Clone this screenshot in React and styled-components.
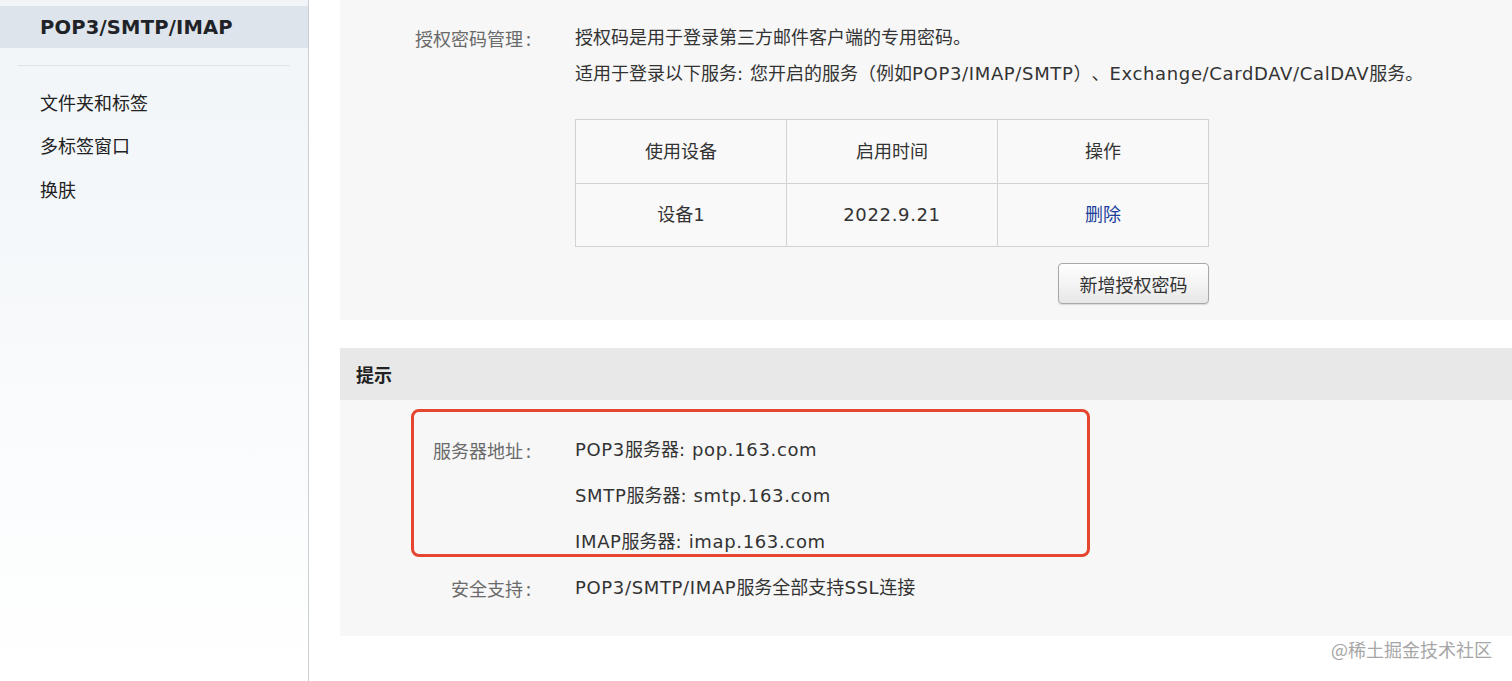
import React from "react";
import styled, { createGlobalStyle } from "styled-components";

const Global = createGlobalStyle`
  html, body { margin: 0; padding: 0; background: #ffffff; }
  body {
    font-family: "DejaVu Sans", "Noto Sans CJK SC", sans-serif;
    color: #333;
    text-spacing-trim: space-all;
  }
  * { box-sizing: border-box; }
`;

const Page = styled.div`
  position: relative;
  display: flex;
  width: 1512px;
  height: 681px;
  overflow: hidden;
  background: #fff;
`;

const Sidebar = styled.nav`
  width: 309px;
  flex: none;
  padding-top: 6px;
  border-right: 1px solid #cbd0d4;
  background: linear-gradient(180deg, #f2f5f8 0%, #f5f8fa 35%, #f9fbfc 60%, #ffffff 100%);
  display: flex;
  flex-direction: column;
`;

const SideActive = styled.div`
  height: 42px;
  display: flex;
  align-items: center;
  padding-left: 40px;
  background: #dde4eb;
  font-family: "DejaVu Sans", sans-serif;
  font-weight: 700;
  font-size: 19.5px;
  letter-spacing: 0.2px;
  color: #1f2328;
`;

const SideDivider = styled.hr`
  margin: 17px 18px 14px 18px;
  border: none;
  border-top: 1px solid #e0e4e8;
  height: 0;
`;

const SideItem = styled.div`
  height: 43.5px;
  display: flex;
  align-items: center;
  padding-left: 40px;
  font-family: "Noto Sans CJK SC", sans-serif;
  font-size: 18px;
  color: #222;
`;

const Main = styled.main`
  flex: 1;
  padding-left: 31px;
  display: flex;
  flex-direction: column;
`;

const Panel = styled.section`
  background: #f7f7f7;
  padding: ${(p) => p.$pad || "0"};
`;

const PanelHead = styled.div`
  height: 52px;
  display: flex;
  align-items: center;
  padding-left: 16px;
  background: #e8e8e8;
  font-family: "Noto Sans CJK SC", sans-serif;
  font-weight: 700;
  font-size: 18px;
  color: #222;
`;

const PanelBody = styled.div`
  position: relative;
  background: #f7f7f7;
  padding: 27px 0 25px 0;
`;

const Field = styled.div`
  display: grid;
  grid-template-columns: 193px 1fr;
  column-gap: 42px;
  line-height: ${(p) => p.$lh || 36}px;
  font-size: 18px;
`;

const Label = styled.div`
  text-align: right;
  color: #6a6a6a;
  font-family: "Noto Sans CJK SC", sans-serif;
  font-size: 18px;
  white-space: nowrap;
`;

const Colon = styled.span`
  margin-left: 3px;
  margin-right: 2px;
`;

const Values = styled.div`
  display: flex;
  flex-direction: column;
  color: #333;
  align-items: flex-start;
`;

const Line = styled.div`
  white-space: nowrap;
`;

const Latin = styled.span`
  letter-spacing: 0.65px;
`;

const Table = styled.table`
  margin-top: 27px;
  width: 634px;
  border-collapse: collapse;
  font-size: 18px;
  color: #333;
`;

const Cell = styled.td`
  width: 211px;
  height: ${(p) => p.$h}px;
  border: 1px solid #d2d2d2;
  text-align: center;
  vertical-align: middle;
  line-height: 1;
  padding: 0;
  background: #f9f9f9;
`;

const LinkText = styled.a`
  color: #1d3f9c;
  text-decoration: none;
  cursor: pointer;
`;

const ButtonRow = styled.div`
  width: 634px;
  display: flex;
  justify-content: flex-end;
  margin-top: 16px;
`;

const Button = styled.button`
  width: 151px;
  height: 41px;
  border: 1px solid #a8a8a8;
  border-radius: 4px;
  background: linear-gradient(180deg, #fefefe 0%, #f3f3f3 55%, #e6e6e6 100%);
  box-shadow: 0 1px 1px rgba(0, 0, 0, 0.12);
  font-family: "Noto Sans CJK SC", sans-serif;
  font-size: 18px;
  color: #333;
  padding: 0;
`;

const Gap = styled.div`
  height: 28px;
`;

const Highlight = styled.div`
  position: absolute;
  left: 71px;
  top: 9px;
  width: 679px;
  height: 148px;
  border: 3px solid #e6452f;
  border-radius: 8px;
  pointer-events: none;
`;

const Watermark = styled.div`
  position: absolute;
  right: 20px;
  bottom: 19px;
  font-family: "Noto Sans CJK SC", sans-serif;
  font-size: 18px;
  color: #a6a6a6;
  text-shadow: 0 0 2px #fff;
`;

export default function App() {
  return (
    <>
      <Global />
      <Page>
        <Sidebar>
          <SideActive>POP3/SMTP/IMAP</SideActive>
          <SideDivider />
          <SideItem>文件夹和标签</SideItem>
          <SideItem>多标签窗口</SideItem>
          <SideItem>换肤</SideItem>
        </Sidebar>
        <Main>
          <Panel $pad="20px 0 16px 0">
            <Field>
              <Label>授权密码管理<Colon>:</Colon></Label>
              <Values>
                <Line>授权码是用于登录第三方邮件客户端的专用密码。</Line>
                <Line>
                  适用于登录以下服务<Latin>: </Latin>您开启的服务（例如<Latin>POP3/IMAP/SMTP</Latin>）、<Latin>Exchange/CardDAV/CalDAV</Latin>服务。
                </Line>
                <Table>
                  <tbody>
                    <tr>
                      <Cell $h={64}>使用设备</Cell>
                      <Cell $h={64}>启用时间</Cell>
                      <Cell $h={64}>操作</Cell>
                    </tr>
                    <tr>
                      <Cell $h={63}>设备1</Cell>
                      <Cell $h={63}><Latin>2022.9.21</Latin></Cell>
                      <Cell $h={63}>
                        <LinkText>删除</LinkText>
                      </Cell>
                    </tr>
                  </tbody>
                </Table>
                <ButtonRow>
                  <Button>新增授权密码</Button>
                </ButtonRow>
              </Values>
            </Field>
          </Panel>
          <Gap />
          <PanelHead>提示</PanelHead>
          <PanelBody>
            <Field $lh={46}>
              <Label>服务器地址<Colon>:</Colon></Label>
              <Values>
                <Line><Latin>POP3</Latin>服务器<Latin>: pop.163.com</Latin></Line>
                <Line><Latin>SMTP</Latin>服务器<Latin>: smtp.163.com</Latin></Line>
                <Line><Latin>IMAP</Latin>服务器<Latin>: imap.163.com</Latin></Line>
              </Values>
            </Field>
            <Field $lh={46}>
              <Label>安全支持<Colon>:</Colon></Label>
              <Values>
                <Line><Latin>POP3/SMTP/IMAP</Latin>服务全部支持<Latin>SSL</Latin>连接</Line>
              </Values>
            </Field>
            <Highlight />
          </PanelBody>
        </Main>
        <Watermark>@稀土掘金技术社区</Watermark>
      </Page>
    </>
  );
}
